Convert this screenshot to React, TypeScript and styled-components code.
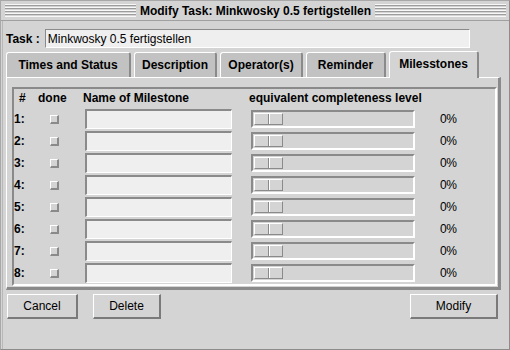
import React from 'react';
import styled, { createGlobalStyle } from 'styled-components';

const GlobalStyle = createGlobalStyle`
  html, body {
    margin: 0;
    padding: 0;
    background: #d4d4d4;
  }
  * {
    box-sizing: border-box;
  }
`;

const tabs = ['Times and Status', 'Description', 'Operator(s)', 'Reminder', 'Milesstones'];
const tabWidths = [125, 83, 83, 80, 90];
const rows = [1, 2, 3, 4, 5, 6, 7, 8];

const App = () => {
  return (
    <>
      <GlobalStyle />
      <Window>
        <TitleBar>
          <Grip />
          <Title>Modify Task: Minkwosky 0.5 fertigstellen</Title>
          <Grip />
        </TitleBar>
        <Body>
          <TaskRow>
            <TaskLabel>Task :</TaskLabel>
            <TaskInput defaultValue="Minkwosky 0.5 fertigstellen" />
          </TaskRow>
          <TabBar>
            {tabs.map((t, i) => (
              <Tab key={t} $active={i === 4} $width={tabWidths[i]}>
                {t}
              </Tab>
            ))}
          </TabBar>
          <Panel>
            <GroupBox>
              <HeadCell $pad={5}>#</HeadCell>
              <HeadCell>done</HeadCell>
              <HeadCell $pad={1}>Name of Milestone</HeadCell>
              <HeadCell>equivalent completeness level</HeadCell>
              <HeadCell />
              {rows.map((n) => (
                <React.Fragment key={n}>
                  <RowNum>{n}:</RowNum>
                  <CheckCell>
                    <Check />
                  </CheckCell>
                  <Cell>
                    <NameEntry />
                  </Cell>
                  <Cell>
                    <Trough>
                      <Handle />
                    </Trough>
                  </Cell>
                  <Percent>0%</Percent>
                </React.Fragment>
              ))}
            </GroupBox>
          </Panel>
          <ButtonRow>
            <Button $width={71}>Cancel</Button>
            <Button $width={68}>Delete</Button>
            <Spacer />
            <Button $width={88}>Modify</Button>
          </ButtonRow>
        </Body>
      </Window>
    </>
  );
};

const Window = styled.div`
  width: 510px;
  height: 350px;
  background: #d4d4d4;
  border: 1px solid #a8a8a8;
  border-right-color: #8c8c8c;
  border-bottom-color: #8c8c8c;
  font-family: 'Liberation Sans', Arial, sans-serif;
  font-size: 12px;
  color: #000;
  display: flex;
  flex-direction: column;
`;

const TitleBar = styled.div`
  height: 20px;
  display: flex;
  align-items: center;
  gap: 4px;
  padding: 0 3px 0 4px;
  border-bottom: 1px solid #a0a0a0;
`;

const Grip = styled.div`
  flex: 1;
  height: 13px;
  background: repeating-linear-gradient(
    to bottom,
    #f8f8f8 0px,
    #f8f8f8 1px,
    #9c9c9c 1px,
    #9c9c9c 2px,
    #d4d4d4 2px,
    #d4d4d4 3px
  );
`;

const Title = styled.div`
  font-weight: bold;
  font-size: 12px;
  white-space: nowrap;
  padding: 1px 0 0;
`;

const Body = styled.div`
  flex: 1;
  display: flex;
  flex-direction: column;
  padding: 0 11px 0 3px;
  border-left: 1px solid #b8b8b8;
  margin-left: 1px;
`;

const TaskRow = styled.div`
  display: flex;
  align-items: center;
  margin-top: 8px;
  gap: 5px;
`;

const TaskLabel = styled.span`
  font-weight: bold;
  font-size: 12px;
`;

const TaskInput = styled.input`
  width: 425px;
  height: 19px;
  background: #efefef;
  border: none;
  border-top: 1px solid #8a8a8a;
  border-left: 1px solid #8a8a8a;
  border-bottom: 1px solid #fff;
  border-right: 1px solid #fff;
  font-family: 'Liberation Sans', Arial, sans-serif;
  font-size: 12px;
  padding: 0 2px;
  outline: none;
`;

const TabBar = styled.div`
  display: flex;
  gap: 3px;
  margin-top: 3px;
  height: 26px;
  align-items: flex-end;
  position: relative;
  z-index: 1;
`;

const Tab = styled.div<{ $active?: boolean; $width: number }>`
  width: ${(p) => p.$width}px;
  height: ${(p) => (p.$active ? 27 : 25)}px;
  margin-bottom: ${(p) => (p.$active ? -1 : 0)}px;
  background: ${(p) => (p.$active ? '#d4d4d4' : '#c2c2c2')};
  border-top: 1px solid #fff;
  border-left: 1px solid #fff;
  border-right: 2px solid #8a8a8a;
  border-radius: 3px 3px 0 0;
  font-weight: bold;
  font-size: 12px;
  display: flex;
  align-items: center;
  justify-content: center;
  padding-bottom: ${(p) => (p.$active ? 2 : 0)}px;
  white-space: nowrap;
`;

const Panel = styled.div`
  height: 213px;
  width: 495px;
  background: #d4d4d4;
  border-top: 1px solid #fff;
  border-left: 1px solid #fff;
  border-right: 3px solid #8a8a8a;
  border-bottom: 3px solid #8a8a8a;
  padding: 9px 2px 0 5px;
`;

const GroupBox = styled.div`
  width: 485px;
  height: 199px;
  border-top: 2px solid #8a8a8a;
  border-left: 2px solid #8a8a8a;
  border-right: 2px solid #fff;
  border-bottom: 2px solid #fff;
  display: grid;
  grid-template-columns: 24px 44px 167px 189px 1fr;
  grid-template-rows: 19px repeat(8, 22px);
  align-items: center;
`;

const HeadCell = styled.div<{ $pad?: number }>`
  font-weight: bold;
  font-size: 12px;
  white-space: nowrap;
  padding-left: ${(p) => p.$pad ?? 0}px;
  padding-bottom: 1px;
`;

const RowNum = styled.div`
  font-weight: bold;
  font-size: 12px;
`;

const Cell = styled.div`
  display: flex;
  align-items: center;
`;

const CheckCell = styled.div`
  padding-left: 12px;
  display: flex;
  align-items: center;
`;

const Check = styled.div`
  width: 9px;
  height: 9px;
  background: #d4d4d4;
  border-top: 1px solid #fff;
  border-left: 1px solid #fff;
  border-right: 2px solid #8a8a8a;
  border-bottom: 2px solid #8a8a8a;
`;

const NameEntry = styled.div`
  margin-left: 3px;
  width: 147px;
  height: 20px;
  background: #efefef;
  border-top: 2px solid #8a8a8a;
  border-left: 2px solid #8a8a8a;
  border-right: 1px solid #fff;
  border-bottom: 1px solid #fff;
`;

const Trough = styled.div`
  margin-left: 2px;
  width: 164px;
  height: 18px;
  background: #d4d4d4;
  border-top: 2px solid #8a8a8a;
  border-left: 2px solid #8a8a8a;
  border-right: 2px solid #fff;
  border-bottom: 2px solid #fff;
  display: flex;
  align-items: center;
  padding-left: 1px;
`;

const Handle = styled.div`
  width: 29px;
  height: 12px;
  background: linear-gradient(
    to right,
    #d4d4d4 0px,
    #d4d4d4 13px,
    #8a8a8a 13px,
    #8a8a8a 14px,
    #fff 14px,
    #fff 15px,
    #d4d4d4 15px
  );
  border-top: 1px solid #fff;
  border-left: 1px solid #fff;
  border-right: 1px solid #8a8a8a;
  border-bottom: 1px solid #8a8a8a;
`;

const Percent = styled.div`
  font-size: 12px;
  padding-left: 2px;
  letter-spacing: -0.5px;
  color: #000;
`;

const ButtonRow = styled.div`
  display: flex;
  gap: 15px;
  margin-top: 4px;
  padding-left: 1px;
`;

const Spacer = styled.div`
  flex: 1;
`;

const Button = styled.div<{ $width: number }>`
  width: ${(p) => p.$width}px;
  height: 25px;
  background: #d4d4d4;
  border-top: 1px solid #fff;
  border-left: 1px solid #fff;
  border-right: 2px solid #7a7a7a;
  border-bottom: 2px solid #7a7a7a;
  font-size: 12px;
  display: flex;
  align-items: center;
  justify-content: center;
`;

export default App;
